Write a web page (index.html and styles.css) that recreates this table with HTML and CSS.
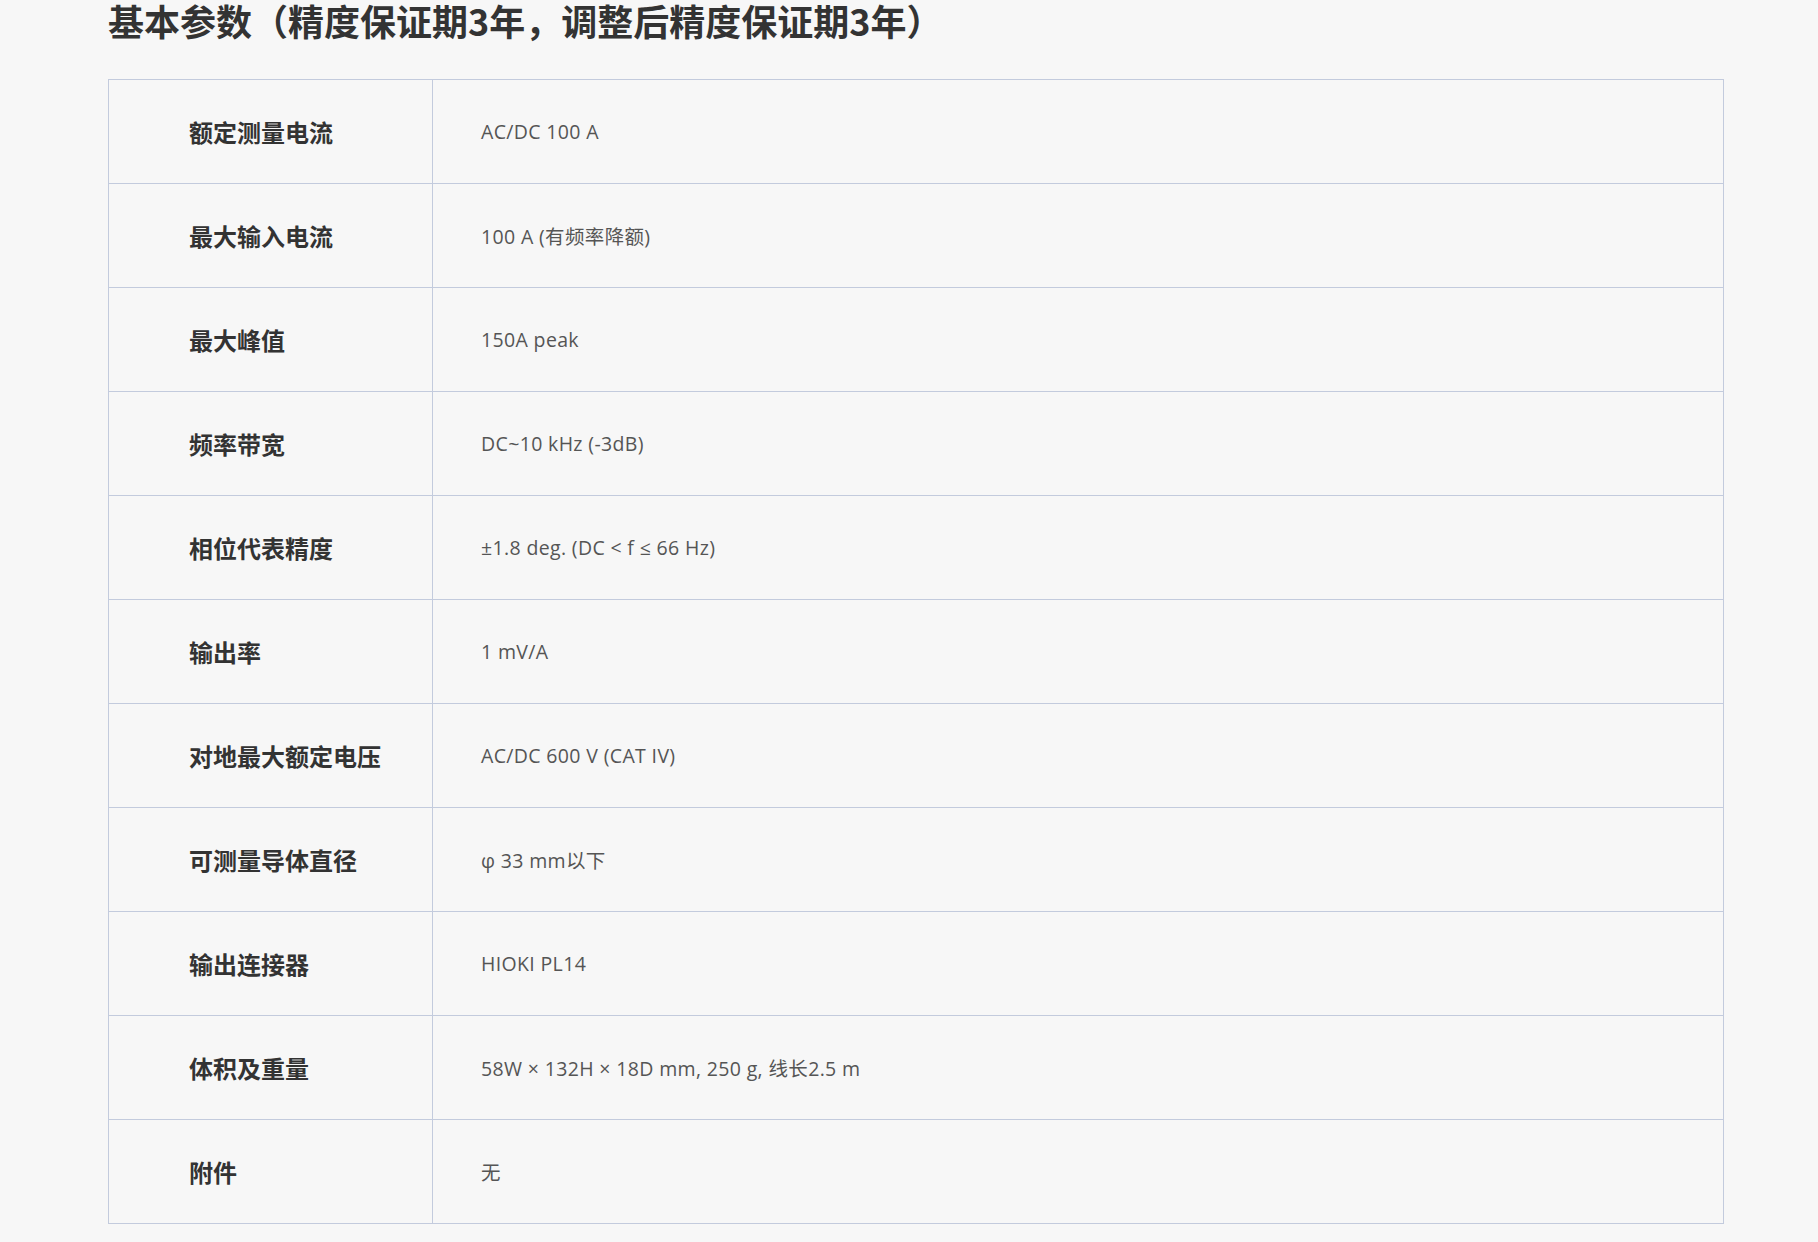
FILE: index.html
```html
<!DOCTYPE html>
<html lang="zh-CN">
<head>
<meta charset="utf-8">
<title>基本参数</title>
<link rel="stylesheet" href="styles.css">
</head>
<body>
<div class="page">
  <h2 class="title">基本参数（精度保证期3年，调整后精度保证期3年）</h2>
  <table class="spec">
    <tbody>
      <tr><th>额定测量电流</th><td>AC/DC 100 A</td></tr>
      <tr><th>最大输入电流</th><td>100 A (有频率降额)</td></tr>
      <tr><th>最大峰值</th><td>150A peak</td></tr>
      <tr><th>频率带宽</th><td>DC~10 kHz (-3dB)</td></tr>
      <tr><th>相位代表精度</th><td>±1.8 deg. (DC &lt; f ≤ 66 Hz)</td></tr>
      <tr><th>输出率</th><td>1 mV/A</td></tr>
      <tr><th>对地最大额定电压</th><td>AC/DC 600 V (CAT IV)</td></tr>
      <tr><th>可测量导体直径</th><td>φ 33 mm以下</td></tr>
      <tr><th>输出连接器</th><td>HIOKI PL14</td></tr>
      <tr><th>体积及重量</th><td>58W × 132H × 18D mm, 250 g, 线长2.5 m</td></tr>
      <tr><th>附件</th><td>无</td></tr>
    </tbody>
  </table>
</div>
</body>
</html>
```
FILE: styles.css
```css
html, body {
  margin: 0;
  padding: 0;
  background: #f7f7f7;
}
.page {
  padding: 0 95px 0 108px;
}
.title {
  margin: 0 0 39px 0;
  font-family: "Noto Sans CJK SC", "Noto Sans", sans-serif;
  font-weight: 700;
  font-size: 36px;
  line-height: 40px;
  color: #333;
}
.spec {
  width: 1616px;
  border-collapse: collapse;
  table-layout: fixed;
}
.spec th, .spec td {
  border: 1px solid #c3cbdd;
  height: 103px;
  padding: 0;
  vertical-align: middle;
  text-align: left;
}
.spec th {
  width: 243px;
  padding-left: 80px;
  font-family: "Noto Sans CJK SC", "Noto Sans", sans-serif;
  font-weight: 700;
  font-size: 24px;
  color: #333;
}
.spec td {
  padding-left: 48px;
  font-family: "Open Sans", "Noto Sans CJK SC", sans-serif;
  font-size: 19.5px;
  letter-spacing: 0.35px;
  color: #555;
}
```
